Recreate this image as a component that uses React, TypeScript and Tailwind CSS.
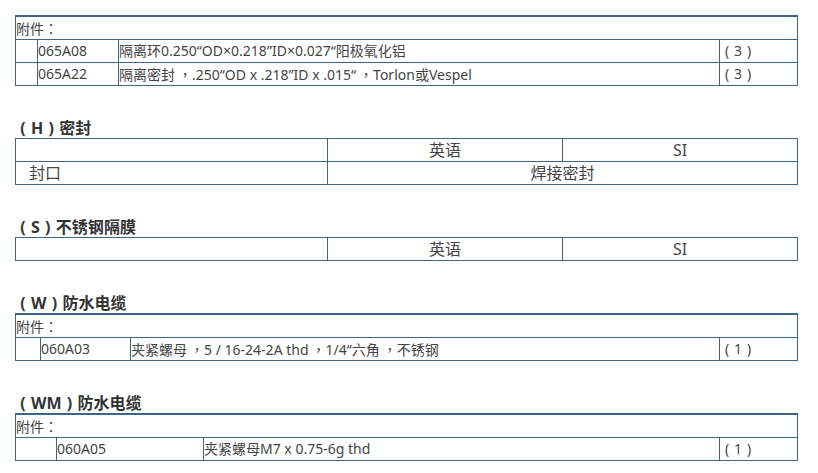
import React from 'react'

const font = { fontFamily: '"Noto Sans", "Noto Sans CJK SC", sans-serif' }

// fullwidth punctuation keeps its full em box; commas sit a little right, as on the source page
const T = ({ s }: { s: string }) => (
  <>
    {Array.from(s).map((c, i) =>
      c === '，' ? (
        <span key={i} className="inline-block w-[17px] pl-[3px] text-center font-['Noto_Sans_CJK_TC',sans-serif]">{c}</span>
      ) : c === '：' ? (
        <span key={i} className="inline-block w-[1em] text-center font-['Noto_Sans_CJK_TC',sans-serif]">{c}</span>
      ) : c === '（' || c === '）' ? (
        <span key={i} className="inline-block w-[1em] text-center">{c === '（' ? '(' : ')'}</span>
      ) : (
        c
      ),
    )}
  </>
)

type Part = { no: string; desc: string; qty: string }

const AttachTable = ({ cols, parts }: { cols: string; parts: Part[] }) => (
  <div className="w-[783px] border border-t-2 border-[#3d6586] text-[14px]">
    <div className="h-[22px] leading-[22px]">
      <T s="附件：" />
    </div>
    {parts.map((p) => (
      <div key={p.no} className={`grid h-[23px] border-t border-[#3d6586] leading-[22px] ${cols}`}>
        <div className="border-r border-[#3d6586]" />
        <div className="border-r border-[#3d6586]">{p.no}</div>
        <div className="whitespace-nowrap border-r border-[#3d6586]">
          <T s={p.desc} />
        </div>
        <div className="whitespace-nowrap">
          <T s={p.qty} />
        </div>
      </div>
    ))}
  </div>
)

const Heading = ({ s }: { s: string }) => (
  <div className="mt-[32px] h-[20px] whitespace-nowrap text-[16px] font-bold leading-[20px] text-[#333]">
    <T s={s} />
  </div>
)

const UnitsRow = () => (
  <div className="grid h-[22px] grid-cols-[312px_235px_1fr] leading-[22px]">
    <div className="border-r border-[#3d6586]" />
    <div className="border-r border-[#3d6586] text-center">英语</div>
    <div className="text-center">SI</div>
  </div>
)

export default function App() {
  return (
    <div className="min-h-[473px] bg-white pl-[15px] pt-[15px] text-[#444]" style={font}>
      <AttachTable
        cols="grid-cols-[22px_81px_601px_1fr]"
        parts={[
          { no: '065A08', desc: '隔离环0.250“OD×0.218”ID×0.027“阳极氧化铝', qty: '（3）' },
          { no: '065A22', desc: '隔离密封，.250“OD x .218”ID x .015“，Torlon或Vespel', qty: '（3）' },
        ]}
      />

      <Heading s="（H）密封" />
      <div className="w-[783px] border border-[#3d6586] text-[16px]">
        <UnitsRow />
        <div className="grid h-[23px] grid-cols-[312px_1fr] border-t border-[#3d6586] leading-[22px]">
          <div className="border-r border-[#3d6586] pl-[13px]">封口</div>
          <div className="text-center">焊接密封</div>
        </div>
      </div>

      <Heading s="（S）不锈钢隔膜" />
      <div className="w-[783px] border border-[#3d6586] text-[16px]">
        <UnitsRow />
      </div>

      <Heading s="（W）防水电缆" />
      <AttachTable
        cols="grid-cols-[25px_90px_589px_1fr]"
        parts={[{ no: '060A03', desc: '夹紧螺母，5 / 16-24-2A thd，1/4“六角，不锈钢', qty: '（1）' }]}
      />

      <Heading s="（WM）防水电缆" />
      <AttachTable
        cols="grid-cols-[41px_147px_516px_1fr]"
        parts={[{ no: '060A05', desc: '夹紧螺母M7 x 0.75-6g thd', qty: '（1）' }]}
      />
    </div>
  )
}
